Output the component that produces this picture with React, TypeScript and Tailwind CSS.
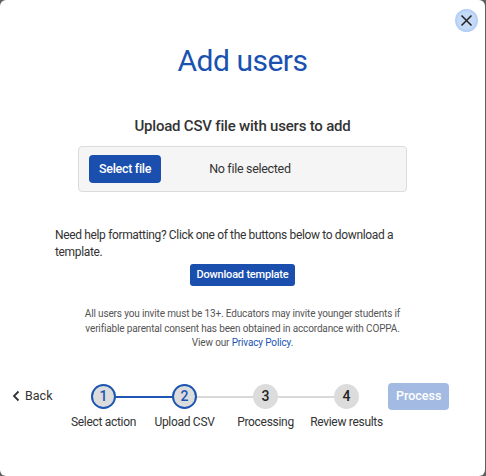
import React from "react";

const font = { fontFamily: 'Roboto, "Noto Sans", sans-serif' };

const steps = [
  { n: 1, label: "Select action", done: true },
  { n: 2, label: "Upload CSV", done: true },
  { n: 3, label: "Processing", done: false },
  { n: 4, label: "Review results", done: false },
];

const Stepper = () => {
  return (
    <div className="flex items-start">
      {steps.map((s, idx) => (
        <div key={s.n} className="relative flex w-[81px] flex-col items-center">
          {idx < steps.length - 1 && (
            <div
              className={`absolute left-[41px] top-[12px] h-[2px] w-[81px] ${
                steps[idx + 1].done ? "bg-[#1d55b3]" : "bg-[#d9d9d9]"
              }`}
            />
          )}
          <div
            className={`relative z-10 flex h-[25px] w-[25px] items-center justify-center rounded-full bg-[#dcdcdc] text-[14px] font-medium ${
              s.done ? "border-2 border-[#1d55b3] text-[#1d55b3]" : "text-[#222]"
            }`}
          >
            {s.n}
          </div>
          <div className="mt-[4px] whitespace-nowrap text-[12px] leading-[18px] tracking-[-0.3px] text-[#333]">
            {s.label}
          </div>
        </div>
      ))}
    </div>
  );
};

export default function App() {
  return (
    <div className="h-[476px] w-[486px] bg-[#5f5f5f]" style={font}>
      <div className="relative flex h-[476px] w-[485px] flex-col items-center rounded-[6px] bg-white">
        <button className="absolute right-[9px] top-[11px] flex h-[19px] w-[19px] items-center justify-center rounded-full bg-[#c4daf7] ring-2 ring-[#b5d0f5]">
          <svg width="13" height="13" viewBox="0 0 13 13" fill="none">
            <path d="M1.5 1.5L11.5 11.5M11.5 1.5L1.5 11.5" stroke="#222" strokeWidth="1.5" />
          </svg>
        </button>

        <h1 className="mt-[40px] text-[30px] leading-[42px] tracking-[-0.5px] text-[#1a52b0]">
          Add users
        </h1>

        <h2 className="mt-[34px] text-[15px] font-medium leading-[20px] tracking-[-0.2px] text-[#333]">
          Upload CSV file with users to add
        </h2>

        <div className="mt-[10px] flex h-[46px] w-[329px] items-center rounded-[4px] border border-[#dcdcdc] bg-[#f5f5f5] px-[10px]">
          <button className="h-[28px] rounded-[4px] bg-[#1a4fae] px-[10px] text-[12.5px] font-medium tracking-[-0.3px] text-white">
            Select file
          </button>
          <span className="ml-[48px] text-[12.5px] tracking-[-0.3px] text-[#333]">No file selected</span>
        </div>

        <p className="mt-[35px] box-content w-[342px] self-start pl-[55px] text-[12px] leading-[17px] tracking-[-0.35px] text-[#333]">
          Need help formatting? Click one of the buttons below to download a template.
        </p>

        <button className="mt-[3px] h-[22px] rounded-[3px] bg-[#1a4fae] px-[7px] text-[11px] font-medium tracking-[-0.2px] text-white">
          Download template
        </button>

        <p className="mt-[21px] w-[330px] text-center text-[10px] leading-[14.5px] tracking-[-0.15px] text-[#555]">
          All users you invite must be 13+. Educators may invite younger students if verifiable
          parental consent has been obtained in accordance with COPPA.
          <br />
          View our <span className="text-[#1d55b3]">Privacy Policy</span>.
        </p>

        <div className="mt-[33px] flex w-full items-start px-[12px]">
          <div className="flex h-[25px] w-[52px] items-center gap-[4px] text-[12.5px] text-[#333]">
            <svg width="9" height="12" viewBox="0 0 9 12" fill="none">
              <path d="M6.5 1.5L2 6L6.5 10.5" stroke="#333" strokeWidth="1.8" />
            </svg>
            Back
          </div>
          <div className="-ml-[1px]">
            <Stepper />
          </div>
          <button className="ml-[1px] -mt-[1px] h-[27px] rounded-[4px] bg-[#a3bae2] px-[8px] text-[12.5px] font-medium text-white">
            Process
          </button>
        </div>
      </div>
    </div>
  );
}
